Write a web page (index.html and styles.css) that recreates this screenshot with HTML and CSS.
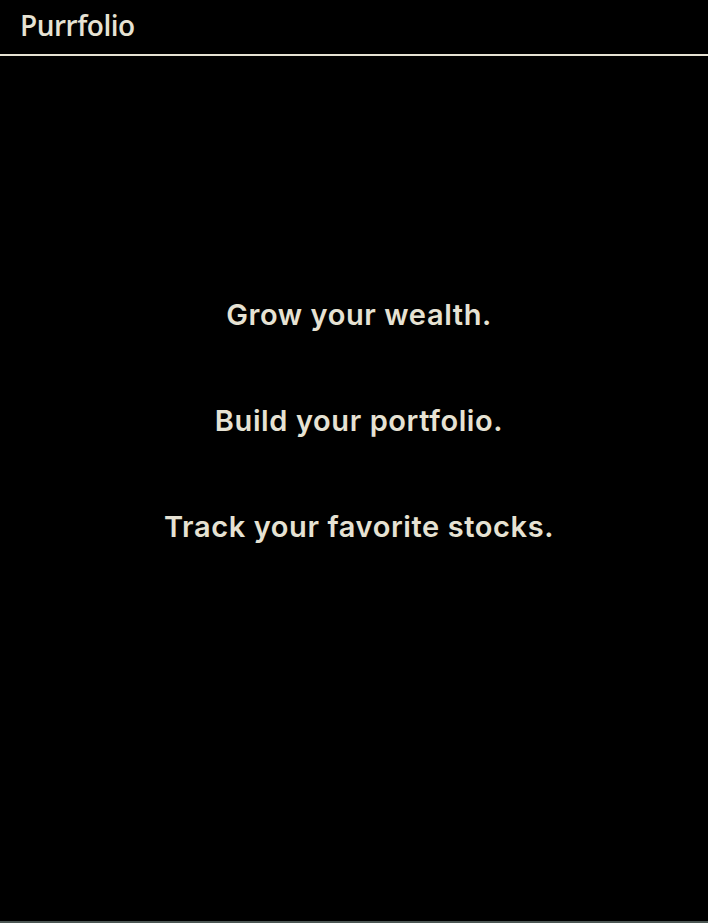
FILE: index.html
```html
<!DOCTYPE html>
<html>
<head>
<meta charset="utf-8">
<link rel="stylesheet" href="styles.css">
</head>
<body>
<div class="page">
  <header class="topbar">
    <span class="brand">Purrfolio</span>
  </header>
  <main class="hero">
    <p class="line">Grow your wealth.</p>
    <p class="line">Build your portfolio.</p>
    <p class="line">Track your favorite stocks.</p>
  </main>
  <footer class="foot"></footer>
</div>
</body>
</html>
```
FILE: styles.css
```css
html, body {
  margin: 0;
  padding: 0;
  background: #000;
}
.page {
  height: 923px;
  display: flex;
  flex-direction: column;
  color: #e6e2d3;
}
.topbar {
  height: 54px;
  border-bottom: 2px solid #e6e2d3;
  box-sizing: content-box;
  display: flex;
  align-items: center;
  padding: 0 20px;
}
.brand {
  font-family: "Open Sans", sans-serif;
  font-size: 28px;
  font-weight: 600;
  letter-spacing: -0.5px;
  margin-top: -4px;
}
.hero {
  flex: 1;
  display: flex;
  flex-direction: column;
  align-items: center;
  justify-content: center;
  gap: 72px;
  padding-bottom: 136px;
  padding-left: 10px;
}
.line {
  margin: 0;
  font-family: "Inter", sans-serif;
  font-weight: 600;
  font-size: 29px;
  line-height: 34px;
  letter-spacing: 0.6px;
}
.foot {
  height: 0;
  border-top: 2px solid #4b5653;
}
```
